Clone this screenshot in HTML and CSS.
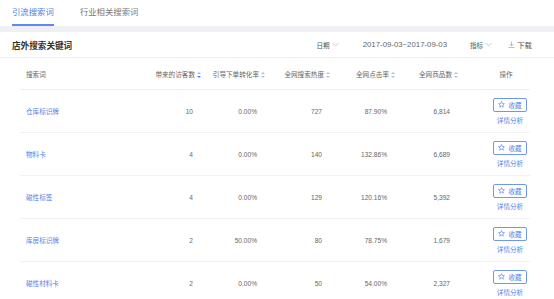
FILE: index.html
```html
<!DOCTYPE html>
<html lang="zh-CN">
<head>
    <meta charset="UTF-8">
    <meta name="viewport" content="width=device-width, initial-scale=1.0">
    <title>引流搜索词</title>
    <link rel="stylesheet" href="styles.css">
</head>
<body>
    <!-- 顶部标签 -->
    <div class="tabs">
        <a class="tab active">引流搜索词</a>
        <a class="tab">行业相关搜索词</a>
    </div>

    <div class="panel">
        <!-- 标题 + 工具栏 -->
        <div class="panel-head">
            <h2>店外搜索关键词</h2>
            <div class="toolbar">
                <span class="picker">日期
                    <svg width="7" height="5" viewBox="0 0 7 5"><path d="M0.5 1 L3.5 4 L6.5 1" fill="none" stroke="#bbb" stroke-width="0.8"/></svg>
                </span>
                <span class="range">2017-09-03~2017-09-03</span>
                <span class="picker">指标
                    <svg width="7" height="5" viewBox="0 0 7 5"><path d="M0.5 1 L3.5 4 L6.5 1" fill="none" stroke="#bbb" stroke-width="0.8"/></svg>
                </span>
                <span class="download">
                    <svg width="7" height="7" viewBox="0 0 7 7"><path d="M3.5 0.5 V5 M1.5 3 L3.5 5 L5.5 3 M0.5 6.5 H6.5" fill="none" stroke="#aaa" stroke-width="0.8"/></svg>
                    下载
                </span>
            </div>
        </div>

        <table class="kw-table">
            <colgroup>
                <col style="width:130px">
                <col style="width:55px">
                <col style="width:64px">
                <col style="width:65px">
                <col style="width:65px">
                <col style="width:63px">
                <col style="width:68px">
            </colgroup>
            <thead>
                <tr>
                    <th class="left">搜索词</th>
                    <th>带来的访客数<i class="sort on"></i></th>
                    <th>引导下单转化率<i class="sort"></i></th>
                    <th>全网搜索热度<i class="sort"></i></th>
                    <th>全网点击率<i class="sort"></i></th>
                    <th>全网商品数<i class="sort"></i></th>
                    <th class="op">操作</th>
                </tr>
            </thead>
            <tbody id="rows"></tbody>
        </table>
    </div>

    <script>
        // 表格数据
        const data = [
            ["仓库标识牌", "10", "0.00%", "727", "87.90%", "6,814"],
            ["物料卡", "4", "0.00%", "140", "132.86%", "6,689"],
            ["磁性标签", "4", "0.00%", "129", "120.16%", "5,392"],
            ["库房标识牌", "2", "50.00%", "80", "78.75%", "1,679"],
            ["磁性材料卡", "2", "0.00%", "50", "54.00%", "2,327"]
        ];

        const star = '<svg width="7" height="7" viewBox="0 0 10 10"><path d="M5 0.8 L6.2 3.6 L9.2 3.8 L6.9 5.8 L7.6 8.8 L5 7.2 L2.4 8.8 L3.1 5.8 L0.8 3.8 L3.8 3.6 Z" fill="none" stroke="#4f7fe8" stroke-width="0.9" stroke-linejoin="round"/></svg>';

        const tbody = document.getElementById("rows");
        data.forEach(row => {
            const tr = document.createElement("tr");
            let html = `<td class="left"><a class="link">${row[0]}</a></td>`;
            for (let i = 1; i < row.length; i++) {
                html += `<td>${row[i]}</td>`;
            }
            html += `<td class="op"><button class="fav">${star}收藏</button><a class="link detail">详情分析</a></td>`;
            tr.innerHTML = html;
            tbody.appendChild(tr);
        });
    </script>
</body>
</html>
```

FILE: styles.css
```css
/* 基本设置 */
body {
    margin: 0;
    font-family: "Liberation Sans", "Noto Sans CJK SC", sans-serif;
    background-color: #ffffff;
    color: #666666;
}

/* 标签栏 */
.tabs {
    display: flex;
    gap: 26px;
    padding-left: 12px;
    height: 26px;
    background-color: #ffffff;
}
.tab {
    font-size: 8.4px;
    line-height: 24px;
    height: 24px;
    color: #777777;
    border-bottom: 2px solid transparent;
    cursor: pointer;
}
.tab.active {
    color: #4f7fe8;
    border-bottom-color: #5b8bee;
}

/* 面板 */
.panel {
    margin-top: 6px;
    background-color: #ffffff;
    box-shadow: 0 -6px 0 #eef0f4;
}
.panel-head {
    display: flex;
    justify-content: space-between;
    align-items: center;
    height: 25px;
    padding: 0 22px 0 12px;
    border-bottom: 1px solid #f0f1f3;
}
.panel-head h2 {
    margin: 0;
    font-size: 8.6px;
    font-weight: bold;
    color: #333333;
}
.toolbar {
    display: flex;
    align-items: center;
    font-size: 6.6px;
    color: #555555;
}
.picker {
    display: flex;
    align-items: center;
    gap: 2px;
}
.range {
    font-size: 7.8px;
    color: #666666;
    margin: 0 23px 0 24px;
}
.download {
    display: flex;
    align-items: center;
    gap: 2px;
    margin-left: 16px;
    font-size: 7.4px;
}

/* 表格 */
.kw-table {
    margin-left: 20px;
    width: 510px;
    border-collapse: collapse;
    table-layout: fixed;
    font-size: 6.6px;
}
.kw-table th {
    height: 31px;
    font-weight: normal;
    color: #666666;
    text-align: right;
    padding: 0 4px 0 0;
    border-bottom: 1px solid #eeeeee;
    white-space: nowrap;
}
.kw-table td {
    height: 42px;
    text-align: right;
    padding: 0 12px 0 0;
    border-bottom: 1px solid #f2f2f2;
    color: #666666;
}
.kw-table .left {
    text-align: left;
    padding-left: 6px;
}
.kw-table .op {
    text-align: center;
    padding: 0 0 0 28px;
}
.kw-table th.op {
    padding-left: 20px;
}

/* 排序图标：上下两个小三角 */
.sort {
    display: inline-block;
    position: relative;
    width: 4px;
    height: 6px;
    margin-left: 2px;
    vertical-align: -1px;
}
.sort::before,
.sort::after {
    content: "";
    position: absolute;
    left: 0;
    border-left: 2px solid transparent;
    border-right: 2px solid transparent;
}
.sort::before {
    top: 0;
    border-bottom: 2.5px solid #b8bdc6;
}
.sort::after {
    bottom: 0;
    border-top: 2.5px solid #b8bdc6;
}
.sort.on::before {
    border-bottom-color: #9bb8f0;
}
.sort.on::after {
    border-top-color: #4f7fe8;
}

/* 链接与按钮 */
.link {
    color: #4f7fe8;
    cursor: pointer;
}
.fav {
    display: inline-flex;
    align-items: center;
    justify-content: center;
    gap: 3px;
    width: 34px;
    height: 14px;
    padding: 0;
    background-color: #ffffff;
    border: 1px solid #6f97ee;
    border-radius: 2px;
    color: #4f7fe8;
    font-family: inherit;
    font-size: 6.6px;
    cursor: pointer;
}
.detail {
    display: block;
    margin-top: 3px;
    font-size: 6.6px;
}
```
